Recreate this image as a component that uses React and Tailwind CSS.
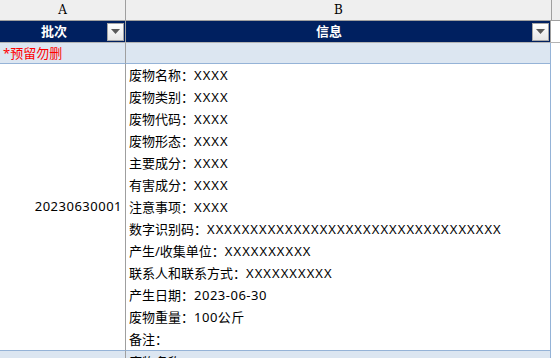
const lines = [
  ['废物名称：', 'XXXX'],
  ['废物类别：', 'XXXX'],
  ['废物代码：', 'XXXX'],
  ['废物形态：', 'XXXX'],
  ['主要成分：', 'XXXX'],
  ['有害成分：', 'XXXX'],
  ['注意事项：', 'XXXX'],
  ['数字识别码：', 'X'.repeat(34)],
  ['产生/收集单位：', 'XXXXXXXXXX'],
  ['联系人和联系方式：', 'XXXXXXXXXX'],
  ['产生日期：', '2023-06-30'],
  ['废物重量：', '100公斤'],
  ['备注：', ''],
];

function FilterButton() {
  return (
    <div className="w-[17px] h-[18px] border border-[#a6a6a6] bg-gradient-to-b from-white to-[#e6e6e6] flex items-center justify-center">
      <svg width="9" height="5" viewBox="0 0 9 5">
        <path d="M0 0h9L4.5 5z" fill="#595959" />
      </svg>
    </div>
  );
}

// X runs are a touch wider in the original font
function Value({ text }) {
  const isX = /^X+$/.test(text);
  return <span className={isX ? 'tracking-[1.05px]' : 'tracking-[0.5px]'}>{text}</span>;
}

export default function App() {
  return (
    <div
      className="w-[560px] h-[358px] overflow-hidden bg-white text-[13px] text-black"
      style={{ fontFamily: '"Noto Sans", "Noto Sans CJK SC", sans-serif' }}
    >
      {/* column letters */}
      <div className="flex h-[21px] bg-[#efefef] border-b border-[#9f9f9f] text-[12px] leading-[20px]">
        <div
          className="w-[126px] border-r border-[#9f9f9f] text-center"
          style={{ fontFamily: '"DejaVu Serif", serif' }}
        >
          A
        </div>
        <div
          className="w-[426px] border-r border-[#9f9f9f] text-center"
          style={{ fontFamily: '"DejaVu Serif", serif' }}
        >
          B
        </div>
        <div className="flex-1" />
      </div>

      {/* table header */}
      <div className="flex h-[22px] border-b border-[#b4b4b4]">
        <div className="w-[126px] bg-[#002060] border-r border-[#9f9f9f] flex items-center px-[1px]">
          <div className="flex-1 text-center text-white font-bold">批次</div>
          <FilterButton />
        </div>
        <div className="w-[425px] bg-[#002060] border-r border-[#9f9f9f] flex items-center pr-[1px]">
          <div className="flex-1 text-center text-white font-bold">信息</div>
          <FilterButton />
        </div>
        <div className="flex-1" />
      </div>

      {/* reserved row */}
      <div className="flex h-[21px]">
        <div className="w-[126px] bg-[#dce6f1] border-r border-b border-r-[#9f9f9f] border-b-[#95b3d7] pl-[3px] leading-[20px] text-[#ff0000]">
          *预留勿删
        </div>
        <div className="w-[425px] bg-[#dce6f1] border-r border-b border-[#95b3d7]" />
        <div className="flex-1" />
      </div>

      {/* data row */}
      <div className="flex h-[287px]">
        <div className="w-[126px] border-r border-b border-r-[#9f9f9f] border-b-[#95b3d7] flex items-center justify-end pr-[3px] tracking-[0.5px]">
          20230630001
        </div>
        <div className="w-[425px] border-r border-b border-[#95b3d7] pl-[3px] flex flex-col">
          {lines.map(([label, value]) => (
            <div key={label} className="h-[22px] leading-[22px] whitespace-nowrap">
              {label}
              <Value text={value} />
            </div>
          ))}
        </div>
        <div className="flex-1" />
      </div>

      {/* next row */}
      <div className="flex h-[22px]">
        <div className="w-[126px] bg-[#dce6f1] border-r border-[#9f9f9f]" />
        <div className="w-[425px] bg-[#dce6f1] border-r border-[#95b3d7] pl-[3px] leading-[22px] whitespace-nowrap">
          废物名称：<Value text="XXXX" />
        </div>
        <div className="flex-1" />
      </div>
    </div>
  );
}
